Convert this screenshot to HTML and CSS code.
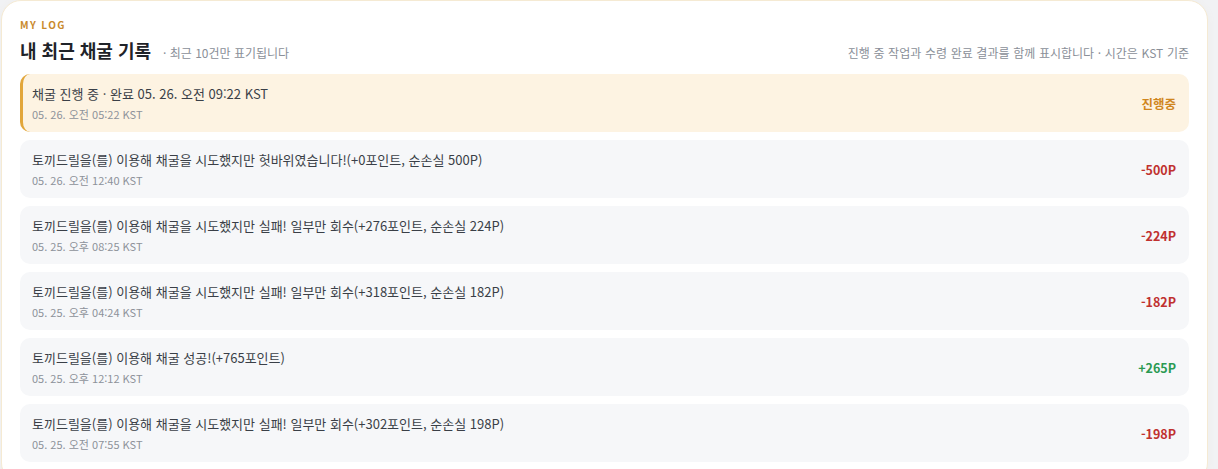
FILE: index.html
```html
<!DOCTYPE html>
<html lang="ko">
<head>
    <meta charset="UTF-8">
    <meta name="viewport" content="width=device-width, initial-scale=1.0">
    <title>내 최근 채굴 기록</title>
    <link rel="stylesheet" href="styles.css">
</head>
<body>

    <div class="page">
        <section class="card">
            <div class="label">MY LOG</div>
            <div class="head">
                <div class="head-left">
                    <h2>내 최근 채굴 기록</h2>
                    <span class="sub">· 최근 10건만 표기됩니다</span>
                </div>
                <div class="head-right">진행 중 작업과 수령 완료 결과를 함께 표시합니다 · 시간은 KST 기준</div>
            </div>

            <ul class="log">
                <li class="row pending">
                    <div class="info">
                        <p class="msg">채굴 진행 중 · 완료 05. 26. 오전 09:22 KST</p>
                        <p class="time">05. 26. 오전 05:22 KST</p>
                    </div>
                    <span class="amount wait">진행중</span>
                </li>
                <li class="row">
                    <div class="info">
                        <p class="msg">토끼드릴을(를) 이용해 채굴을 시도했지만 헛바위였습니다!(+0포인트, 순손실 500P)</p>
                        <p class="time">05. 26. 오전 12:40 KST</p>
                    </div>
                    <span class="amount minus">-500P</span>
                </li>
                <li class="row">
                    <div class="info">
                        <p class="msg">토끼드릴을(를) 이용해 채굴을 시도했지만 실패! 일부만 회수(+276포인트, 순손실 224P)</p>
                        <p class="time">05. 25. 오후 08:25 KST</p>
                    </div>
                    <span class="amount minus">-224P</span>
                </li>
                <li class="row">
                    <div class="info">
                        <p class="msg">토끼드릴을(를) 이용해 채굴을 시도했지만 실패! 일부만 회수(+318포인트, 순손실 182P)</p>
                        <p class="time">05. 25. 오후 04:24 KST</p>
                    </div>
                    <span class="amount minus">-182P</span>
                </li>
                <li class="row">
                    <div class="info">
                        <p class="msg">토끼드릴을(를) 이용해 채굴 성공!(+765포인트)</p>
                        <p class="time">05. 25. 오후 12:12 KST</p>
                    </div>
                    <span class="amount plus">+265P</span>
                </li>
                <li class="row">
                    <div class="info">
                        <p class="msg">토끼드릴을(를) 이용해 채굴을 시도했지만 실패! 일부만 회수(+302포인트, 순손실 198P)</p>
                        <p class="time">05. 25. 오전 07:55 KST</p>
                    </div>
                    <span class="amount minus">-198P</span>
                </li>
            </ul>
        </section>
    </div>

</body>
</html>
```

FILE: styles.css
```css
* {
    margin: 0;
    padding: 0;
    box-sizing: border-box;
}

body {
    background: #f1f2f4;
    font-family: "Noto Sans CJK KR", "Noto Sans", sans-serif;
    color: #2b2f36;
}

.page {
    padding: 0 10px 0 1px;
}

.card {
    background: #fff;
    border: 1px solid #f5ead3;
    border-radius: 20px;
    padding: 16px 18px 20px;
    box-shadow: 0 2px 8px rgba(200, 160, 80, 0.06);
}

.label {
    font-size: 10px;
    font-weight: 700;
    letter-spacing: 1.4px;
    color: #c98a2c;
    line-height: 16px;
}

.head {
    display: flex;
    justify-content: space-between;
    align-items: flex-end;
    margin-top: 4px;
    margin-bottom: 11px;
}

.head-left {
    display: flex;
    align-items: baseline;
    gap: 12px;
}

.head h2 {
    font-size: 18px;
    font-weight: 700;
    color: #1f2329;
    line-height: 26px;
}

.sub {
    font-size: 12px;
    color: #8a8f98;
}

.head-right {
    font-size: 12px;
    color: #8a8f98;
    line-height: 20px;
    word-spacing: 0.3px;
}

.log {
    list-style: none;
    display: flex;
    flex-direction: column;
    gap: 8px;
}

.row {
    display: flex;
    justify-content: space-between;
    align-items: center;
    background: #f6f7f9;
    border-radius: 10px;
    padding: 10px 13px 10px 12px;
}

.row.pending {
    background: #fdf3e2;
    border-left: 3px solid #e2a63a;
    padding-left: 9px;
}

.msg {
    font-size: 13px;
    line-height: 20px;
    color: #3a3f47;
}

.time {
    font-size: 11px;
    line-height: 16px;
    margin-top: 2px;
    color: #8d929a;
}

.amount {
    font-size: 12.5px;
    font-weight: 700;
}

.amount.minus {
    color: #c0312f;
}

.amount.plus {
    color: #2a9a52;
}

.amount.wait {
    color: #d0861e;
}
```
